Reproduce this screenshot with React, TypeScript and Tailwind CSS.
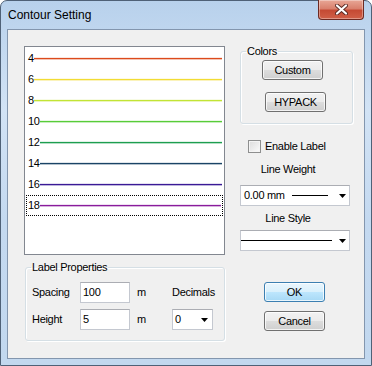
import clsx from "clsx";

const contours = [
  { depth: "4", color: "#dc4a1c" },
  { depth: "6", color: "#f2dc34" },
  { depth: "8", color: "#c2e436" },
  { depth: "10", color: "#58cc38" },
  { depth: "12", color: "#1e9e50" },
  { depth: "14", color: "#1a4466" },
  { depth: "16", color: "#3a1a96" },
  { depth: "18", color: "#8a1c9c" },
];

function DropArrow() {
  return (
    <svg width="7" height="4" viewBox="0 0 7 4" className="shrink-0">
      <path d="M0 0h7L3.5 4z" fill="#000" />
    </svg>
  );
}

function WinButton({ label, isDefault, className }: { label: string; isDefault?: boolean; className?: string }) {
  return (
    <button
      className={clsx(
        "block h-[20px] w-[61px] rounded-[3px] border text-[11px] leading-none text-black shadow-[inset_0_0_0_1px_rgba(255,255,255,0.75)]",
        isDefault
          ? "border-[#3c7fb1] bg-[linear-gradient(#eaf6fd_0%,#d9f0fc_50%,#bee6fd_50%,#a7d9f5_100%)]"
          : "border-[#707070] bg-[linear-gradient(#f2f2f2_0%,#ebebeb_50%,#dddddd_50%,#cfcfcf_100%)]",
        className
      )}
    >
      {label}
    </button>
  );
}

function TextBox({ value }: { value: string }) {
  return (
    <div className="flex h-[21px] w-[50px] items-center border border-[#c4c8d0] border-t-[#abadb3] bg-white pl-[2px]">
      {value}
    </div>
  );
}

export default function App() {
  return (
    <div className="h-[366px] w-[372px] bg-white font-['Liberation_Sans',Arial,sans-serif] text-[11px] tracking-[-0.3px] text-black">
      <div className="flex h-full w-full flex-col rounded-t-[7px] border border-[#4f6177] bg-[linear-gradient(180deg,#b8d1ec_0%,#d2e3f5_30%,#c4d9f0_60%,#c2d8ef_100%)]">
        {/* Title bar */}
        <div className="flex h-[28px] shrink-0 items-start justify-between pl-[7px] pr-[7px]">
          <span className="mt-[7px] text-[12px] leading-[15px] tracking-normal">Contour Setting</span>
          <div className="-mt-px flex h-[20px] w-[46px] items-center justify-center rounded-b-[4px] border border-t-0 border-[#6d2a22] bg-[linear-gradient(#e8a796_0%,#d9806d_45%,#c54a34_55%,#d06048_100%)] shadow-[inset_0_0_0_1px_rgba(255,255,255,0.35)]">
            <svg width="13" height="11" viewBox="0 0 13 11">
              <path d="M2 1.5l9 8M11 1.5l-9 8" stroke="#5a2a24" strokeWidth="4" strokeLinecap="round" />
              <path d="M2 1.5l9 8M11 1.5l-9 8" stroke="#fff" strokeWidth="2.2" strokeLinecap="round" />
            </svg>
          </div>
        </div>

        {/* Client area */}
        <div className="mx-[6px] mb-[6px] flex flex-1 border border-[#8396ae] bg-[#f0f0f0] pl-[16px] pt-[16px]">
          {/* Left column */}
          <div className="flex w-[201px] flex-col">
            <div className="flex h-[209px] flex-col border border-[#828790] bg-white pt-px">
              {contours.map((c, i) => (
                <div
                  key={c.depth}
                  className={clsx(
                    "mx-px flex h-[21px] items-center pl-[2px] pr-px",
                    i === contours.length - 1 ? "border border-dotted border-black pl-px pr-0" : ""
                  )}
                >
                  <span className="leading-none">{c.depth}</span>
                  <div
                    className="h-px flex-1"
                    style={{ backgroundColor: c.color, boxShadow: `0 1px 0 ${c.color}55, 0 -1px 0 ${c.color}22` }}
                  />
                </div>
              ))}
            </div>

            <fieldset className="ml-px mt-[6px] w-[200px] rounded-[3px] border border-[#d5dfe5] px-[5px] pb-[10px] pt-[8px] shadow-[inset_1px_1px_0_#fff,1px_1px_0_#fff]">
              <legend className="px-px leading-[13px]">Label Properties</legend>
              <div className="flex h-[21px] items-center">
                <span className="w-[49px] pl-px">Spacing</span>
                <TextBox value="100" />
                <span className="ml-[7px] w-[35px]">m</span>
                <span>Decimals</span>
              </div>
              <div className="mt-[6px] flex h-[21px] items-center">
                <span className="w-[49px] pl-px">Height</span>
                <TextBox value="5" />
                <span className="ml-[7px] w-[35px]">m</span>
                <div className="flex h-[21px] w-[41px] items-center justify-between border border-[#c4c8d0] border-t-[#abadb3] bg-white pl-[2px] pr-[4px]">
                  <span>0</span>
                  <DropArrow />
                </div>
              </div>
            </fieldset>
          </div>

          {/* Right column */}
          <div className="-mt-px ml-[15px] flex w-[113px] flex-col">
            <fieldset className="rounded-[3px] border border-[#d5dfe5] px-[5px] pb-[11px] pt-[2px] shadow-[inset_1px_1px_0_#fff,1px_1px_0_#fff]">
              <legend className="px-px leading-[13px]">Colors</legend>
              <WinButton label="Custom" className="ml-[16px] h-[19px] w-[60px]" />
              <WinButton label="HYPACK" className="ml-[19px] mt-[12px] h-[19px] w-[60px]" />
            </fieldset>

            <div className="ml-[8px] mt-[16px] flex items-center gap-[4px]">
              <div className="h-[13px] w-[13px] border border-[#8e8f8f] bg-[linear-gradient(135deg,#dcdcdc,#fbfbfb)] shadow-[inset_0_0_0_1px_#f4f4f4]" />
              <span className="leading-[13px]">Enable Label</span>
            </div>

            <div className="mt-[10px] pr-[17px] text-center leading-[13px]">Line Weight</div>
            <div className="mt-[9px] flex h-[21px] w-[110px] items-center border border-[#c4c8d0] border-t-[#abadb3] bg-white pl-[3px] pr-[3px]">
              <span className="w-[48px]">0.00 mm</span>
              <div className="h-px w-[36px] bg-black" />
              <div className="flex flex-1 justify-end">
                <DropArrow />
              </div>
            </div>

            <div className="mt-[6px] pr-[17px] text-center leading-[13px]">Line Style</div>
            <div className="mt-[5px] flex h-[21px] w-[110px] items-center border border-[#c4c8d0] border-t-[#abadb3] bg-white pr-[3px]">
              <div className="h-px w-[91px] bg-black" />
              <div className="flex flex-1 justify-end">
                <DropArrow />
              </div>
            </div>

            <WinButton label="OK" isDefault className="ml-[24px] mt-[31px]" />
            <WinButton label="Cancel" className="ml-[24px] mt-[9px]" />
          </div>
        </div>
      </div>
    </div>
  );
}
